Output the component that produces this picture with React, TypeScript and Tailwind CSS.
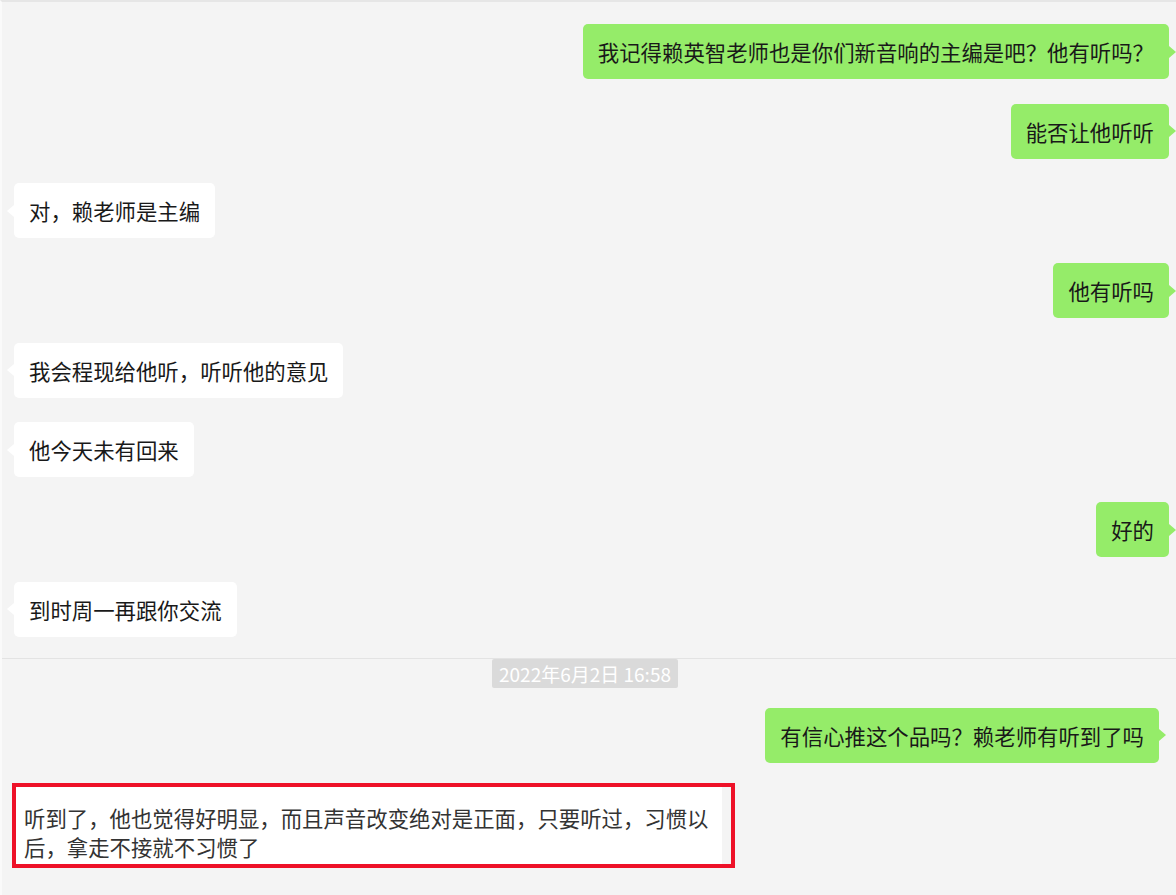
const font = 'font-["Microsoft_YaHei","Noto_Sans_CJK_SC",sans-serif]'

type Msg = { side: 'left' | 'right'; text: string }

const MESSAGES: Msg[] = [
  { side: 'right', text: '我记得赖英智老师也是你们新音响的主编是吧？他有听吗？' },
  { side: 'right', text: '能否让他听听' },
  { side: 'left', text: '对，赖老师是主编' },
  { side: 'right', text: '他有听吗' },
  { side: 'left', text: '我会程现给他听，听听他的意见' },
  { side: 'left', text: '他今天未有回来' },
  { side: 'right', text: '好的' },
  { side: 'left', text: '到时周一再跟你交流' },
]

function Bubble({ side, text }: Msg) {
  const mine = side === 'right'
  return (
    <div className={mine ? 'flex justify-end' : 'flex justify-start'}>
      <div
        className={
          'relative h-[55px] rounded-[5px] px-[15px] py-[12px] text-[21.4px] leading-[31px] whitespace-nowrap text-[#191919] ' +
          (mine ? 'bg-[#95ec69]' : 'bg-white')
        }
      >
        {text}
        {mine ? (
          <span className="absolute top-1/2 -right-[7px] h-0 w-0 -translate-y-1/2 border-y-[6px] border-l-[7px] border-y-transparent border-l-[#95ec69]" />
        ) : (
          <span className="absolute top-1/2 -left-[7px] h-0 w-0 -translate-y-1/2 border-y-[6px] border-r-[7px] border-y-transparent border-r-white" />
        )}
      </div>
    </div>
  )
}

export default function App() {
  return (
    <div className={`${font} h-[895px] w-[1176px] overflow-hidden border-t-2 border-l-2 border-t-[#e6e6e6] border-l-[#fafafa] bg-[#f4f4f4]`}>
      <div className="flex flex-col gap-[24.7px] pt-[22px] pr-[7px] pl-[12px]">
        {MESSAGES.map((m, i) => (
          <Bubble key={i} {...m} />
        ))}
      </div>

      {/* second screenshot section */}
      <div className="mt-[21px] border-t border-[#e3e3e3]">
        <div className="flex justify-center">
          <span className="ml-[-8px] rounded-[2px] bg-[#dadada] px-[7px] text-[19px] leading-[29px] text-white">
            2022年6月2日 16:58
          </span>
        </div>
        <div className="mt-[20px] flex justify-end pr-[17px]">
          <div className="relative h-[55px] rounded-[5px] bg-[#95ec69] px-[15px] py-[12px] text-[21.4px] leading-[31px] whitespace-nowrap text-[#191919]">
            有信心推这个品吗？赖老师有听到了吗
            <span className="absolute top-1/2 -right-[7px] h-0 w-0 -translate-y-1/2 border-y-[6px] border-l-[7px] border-y-transparent border-l-[#95ec69]" />
          </div>
        </div>
        <div className="mt-[20px] ml-[10px] h-[85px] w-[723px] border-4 border-[#ee1128] bg-[#f4f4f4]">
          <div className="h-full w-[706px] bg-white pt-[16px] pl-[8px] text-[21.4px] leading-[29px] text-[#333]">
            <p className="w-[692px]">听到了，他也觉得好明显，而且声音改变绝对是正面，只要听过，习惯以后，拿走不接就不习惯了</p>
          </div>
        </div>
      </div>
    </div>
  )
}
